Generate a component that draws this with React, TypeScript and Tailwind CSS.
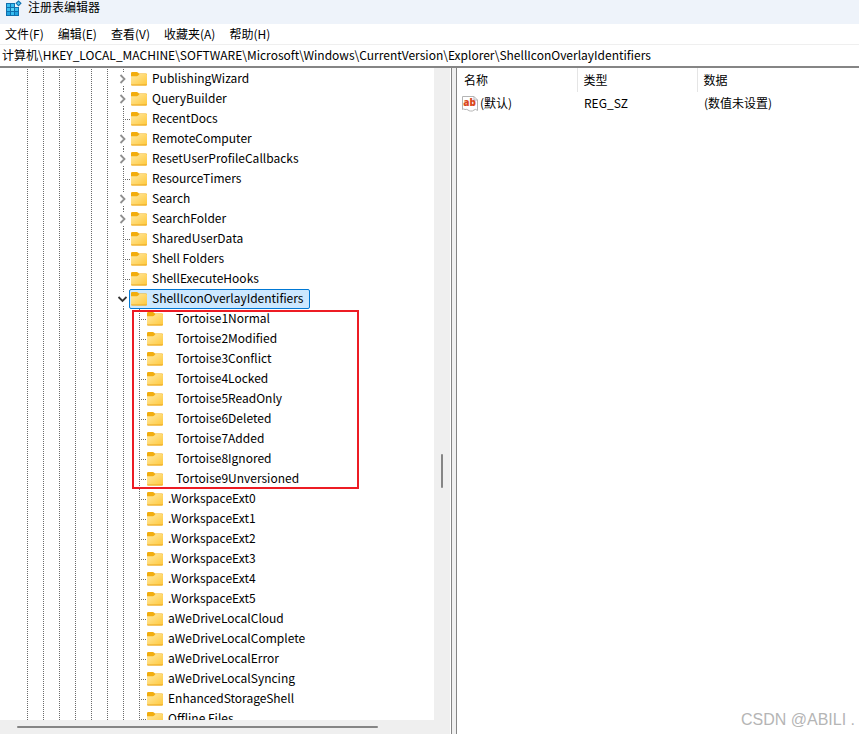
import { useState } from "react"

interface RegistryKey {
  name: string
  expandable?: boolean
  indented?: boolean
}

const ROOT_KEYS: RegistryKey[] = [
  { name: "PublishingWizard", expandable: true },
  { name: "QueryBuilder", expandable: true },
  { name: "RecentDocs" },
  { name: "RemoteComputer", expandable: true },
  { name: "ResetUserProfileCallbacks", expandable: true },
  { name: "ResourceTimers" },
  { name: "Search", expandable: true },
  { name: "SearchFolder", expandable: true },
  { name: "SharedUserData" },
  { name: "Shell Folders" },
  { name: "ShellExecuteHooks" },
]

const TORTOISE_KEYS: RegistryKey[] = [
  { name: "Tortoise1Normal", indented: true },
  { name: "Tortoise2Modified", indented: true },
  { name: "Tortoise3Conflict", indented: true },
  { name: "Tortoise4Locked", indented: true },
  { name: "Tortoise5ReadOnly", indented: true },
  { name: "Tortoise6Deleted", indented: true },
  { name: "Tortoise7Added", indented: true },
  { name: "Tortoise8Ignored", indented: true },
  { name: "Tortoise9Unversioned", indented: true },
]

const OTHER_KEYS: RegistryKey[] = [
  { name: ".WorkspaceExt0" },
  { name: ".WorkspaceExt1" },
  { name: ".WorkspaceExt2" },
  { name: ".WorkspaceExt3" },
  { name: ".WorkspaceExt4" },
  { name: ".WorkspaceExt5" },
  { name: "aWeDriveLocalCloud" },
  { name: "aWeDriveLocalComplete" },
  { name: "aWeDriveLocalError" },
  { name: "aWeDriveLocalSyncing" },
  { name: "EnhancedStorageShell" },
  { name: "Offline Files" },
]

const MENUS = ["文件(F)", "编辑(E)", "查看(V)", "收藏夹(A)", "帮助(H)"]

function RegeditIcon() {
  return (
    <svg className="h-4 w-4 shrink-0" viewBox="0 0 16 16" aria-hidden="true">
      <path d="M0 3H9V7H13V16H0z" fill="#0f6fae" />
      <g fill="#38bdf0">
        <rect x="1" y="4" width="3" height="3" />
        <rect x="5" y="4" width="3" height="3" />
        <rect x="1" y="8" width="3" height="3" />
        <rect x="5" y="8" width="3" height="3" fill="#5fd3f7" />
        <rect x="9" y="8" width="3" height="3" />
        <rect x="1" y="12" width="3" height="3" fill="#1fa3e0" />
        <rect x="5" y="12" width="3" height="3" />
        <rect x="9" y="12" width="3" height="3" fill="#1fa3e0" />
      </g>
      <path d="M12.500 0.300 15.700 3.300 12.500 6.400 9.400 3.300z" fill="#0f6fae" />
      <path d="M12.500 1.700 14.200 3.300 12.500 5 10.900 3.300z" fill="#4cc4f0" />
    </svg>
  )
}

function FolderIcon() {
  return (
    <svg className="h-[14px] w-4 shrink-0" viewBox="0 0 16 14" aria-hidden="true">
      <defs>
        <linearGradient id="folder-face" x1="0" y1="0" x2="1" y2="1">
          <stop offset="0" stopColor="#ffe9a3" />
          <stop offset="1" stopColor="#ffc83a" />
        </linearGradient>
      </defs>
      <path d="M0 1.200Q0 0 1.200 0H5.800Q6.400 0 6.900 0.500L8 1.600H15Q16 1.600 16 2.600V6H0z" fill="#f2ad0e" />
      <path d="M0 4.200H5.800Q6.600 4.200 7.200 3.600L8.600 2H15Q16 2 16 3V12.600Q16 13.600 15 13.600H1Q0 13.600 0 12.600z" fill="url(#folder-face)" />
      <path d="M0 12.600H16Q16 13.600 15 13.600H1Q0 13.600 0 12.600z" fill="#e9a520" />
    </svg>
  )
}

function StringValueIcon() {
  return (
    <svg className="h-4 w-4 shrink-0" viewBox="0 0 16 16" aria-hidden="true">
      <path
        d="M0.500 0.500H12L15.500 4V14.500Q13.500 12.500 12 14T8.500 15Q7 15 6 14T3 13.500Q1.500 12.500 0.500 13.500z"
        fill="#ffffff"
        stroke="#b4b4b4"
      />
      <path d="M12 0.500V4H15.500" fill="none" stroke="#b4b4b4" />
      <text x="7.500" y="10" textAnchor="middle" fontFamily="Open Sans, sans-serif" fontWeight="800" fontSize="10" fill="#d9481c">
        ab
      </text>
    </svg>
  )
}

// one dotted vertical line per ancestor level
function Guides({ count }: { count: number }) {
  return (
    <>
      {Array.from({ length: count }, (_, i) => (
        <span key={i} className="flex w-4 shrink-0 justify-center pl-px">
          <span className="w-px bg-[linear-gradient(#6b6b6b_50%,transparent_50%)] bg-[length:1px_2px]" />
        </span>
      ))}
    </>
  )
}

function LeafConnector() {
  return (
    <span className="flex w-[14px] shrink-0 items-center pl-2">
      <span className="h-full w-px shrink-0 bg-[linear-gradient(#6b6b6b_50%,transparent_50%)] bg-[length:1px_2px]" />
      <span className="-mr-px ml-px h-px flex-1 bg-[linear-gradient(90deg,#6b6b6b_50%,transparent_50%)] bg-[length:2px_1px]" />
    </span>
  )
}

function Toggle({ open, onClick }: { open: boolean; onClick?: () => void }) {
  return (
    <button
      type="button"
      aria-label={open ? "折叠" : "展开"}
      onClick={onClick}
      className="flex w-[14px] shrink-0 flex-col items-center justify-between"
    >
      <span className="ml-[3px] h-[3px] w-px bg-[linear-gradient(#6b6b6b_50%,transparent_50%)] bg-[length:1px_2px]" />
      <svg className="h-[10px] w-[10px]" viewBox="0 0 10 10" fill="none" aria-hidden="true">
        {open ? (
          <path d="M1.500 3 5.500 7 9.500 3" stroke="#333333" strokeWidth="1.800" />
        ) : (
          <path d="M3.500 1 7.500 5 3.500 9" stroke="#8f8f8f" strokeWidth="1.800" />
        )}
      </svg>
      <span className="ml-[3px] h-[3px] w-px bg-[linear-gradient(#6b6b6b_50%,transparent_50%)] bg-[length:1px_2px]" />
    </button>
  )
}

interface KeyRowProps {
  item: RegistryKey
  depth: number
  selected?: boolean
  open?: boolean
  onToggle?: () => void
}

function KeyRow({ item, depth, selected = false, open = false, onToggle }: KeyRowProps) {
  return (
    <li className="flex h-5 pl-[19px]">
      <Guides count={depth} />
      {item.expandable ? <Toggle open={open} onClick={onToggle} /> : <LeafConnector />}
      <button
        type="button"
        className={
          selected
            ? "flex h-5 items-center gap-[5px] rounded-xs border border-[#0078d4] bg-[#cce8ff] pr-[5px] pl-px whitespace-nowrap"
            : "flex h-5 items-center gap-[5px] border border-transparent pr-[5px] pl-px whitespace-nowrap"
        }
      >
        <FolderIcon />
        <span className={item.indented ? "pb-[2px] pl-2" : "pb-[2px]"}>{item.name}</span>
      </button>
    </li>
  )
}

function KeyTree() {
  const [open, setOpen] = useState(true)

  return (
    <div className="flex min-h-0 w-[434px] flex-col">
      <ul className="min-h-0 flex-1 overflow-hidden pt-px">
        {ROOT_KEYS.map((item) => (
          <KeyRow key={item.name} item={item} depth={6} />
        ))}
        <KeyRow
          item={{ name: "ShellIconOverlayIdentifiers", expandable: true }}
          depth={6}
          selected
          open={open}
          onToggle={() => setOpen(!open)}
        />
        {open && (
          <li className="relative">
            <ul>
              {TORTOISE_KEYS.map((item) => (
                <KeyRow key={item.name} item={item} depth={7} />
              ))}
            </ul>
            <div className="pointer-events-none absolute top-px bottom-0 left-[132px] w-[227px] border-2 border-[#ed1c24]" />
          </li>
        )}
        {open && OTHER_KEYS.map((item) => <KeyRow key={item.name} item={item} depth={7} />)}
      </ul>
      <div className="flex h-[14px] shrink-0 items-center bg-[#efefef] pl-[17px]">
        <div className="h-[2px] w-[361px] rounded-full bg-[#858585]" />
      </div>
    </div>
  )
}

export default function App() {
  const [path, setPath] = useState(
    "计算机\\HKEY_LOCAL_MACHINE\\SOFTWARE\\Microsoft\\Windows\\CurrentVersion\\Explorer\\ShellIconOverlayIdentifiers",
  )

  return (
    <div className="relative flex h-screen flex-col overflow-hidden bg-white font-['Noto_Sans_CJK_SC',sans-serif] text-[12px] leading-4 text-black">
      <header className="flex h-6 shrink-0 items-start gap-[6px] bg-[#eef3fa] pl-[6px]">
        <RegeditIcon />
        <h1 className="leading-[14px]">注册表编辑器</h1>
      </header>

      <nav className="flex h-5 shrink-0 items-center gap-[14px] pl-[5px]">
        {MENUS.map((menu) => (
          <button key={menu} type="button">
            {menu}
          </button>
        ))}
      </nav>

      <input
        aria-label="地址"
        value={path}
        onChange={(e) => setPath(e.target.value)}
        className="h-[22px] w-full shrink-0 border-t border-[#efefef] px-[2px] pb-[2px] outline-none"
      />

      <main className="flex min-h-0 flex-1 border-t-2 border-[#858585]">
        <KeyTree />
        <div className="flex w-4 shrink-0 justify-center bg-[#efefef]">
          <div className="mt-[386px] h-[34px] w-[2px] rounded-full bg-[#858585]" />
        </div>
        <div className="ml-px w-[6px] shrink-0 border-x border-[#858585] bg-[#f0f0f0]" />

        <section className="min-w-0 flex-1">
          <table className="w-full table-fixed text-left">
            <thead>
              <tr className="h-6">
                <th className="w-[120px] border-r border-[#e5e5e5] pl-[7px] font-normal">名称</th>
                <th className="w-[120px] border-r border-[#e5e5e5] pl-[6px] font-normal">类型</th>
                <th className="pl-[6px] font-normal">数据</th>
              </tr>
            </thead>
            <tbody>
              <tr className="h-6">
                <td className="pl-[5px]">
                  <span className="flex items-center gap-[2px]">
                    <StringValueIcon />
                    <span className="pb-[2px]">(默认)</span>
                  </span>
                </td>
                <td className="pb-[2px] pl-[7px]">REG_SZ</td>
                <td className="pb-[2px] pl-[7px]">(数值未设置)</td>
              </tr>
            </tbody>
          </table>
        </section>
      </main>

      <p className="pointer-events-none absolute right-1 bottom-1 font-['Liberation_Sans',sans-serif] text-base leading-5 text-[#b5b5b5]">
        CSDN @ABILI .
      </p>
    </div>
  )
}
